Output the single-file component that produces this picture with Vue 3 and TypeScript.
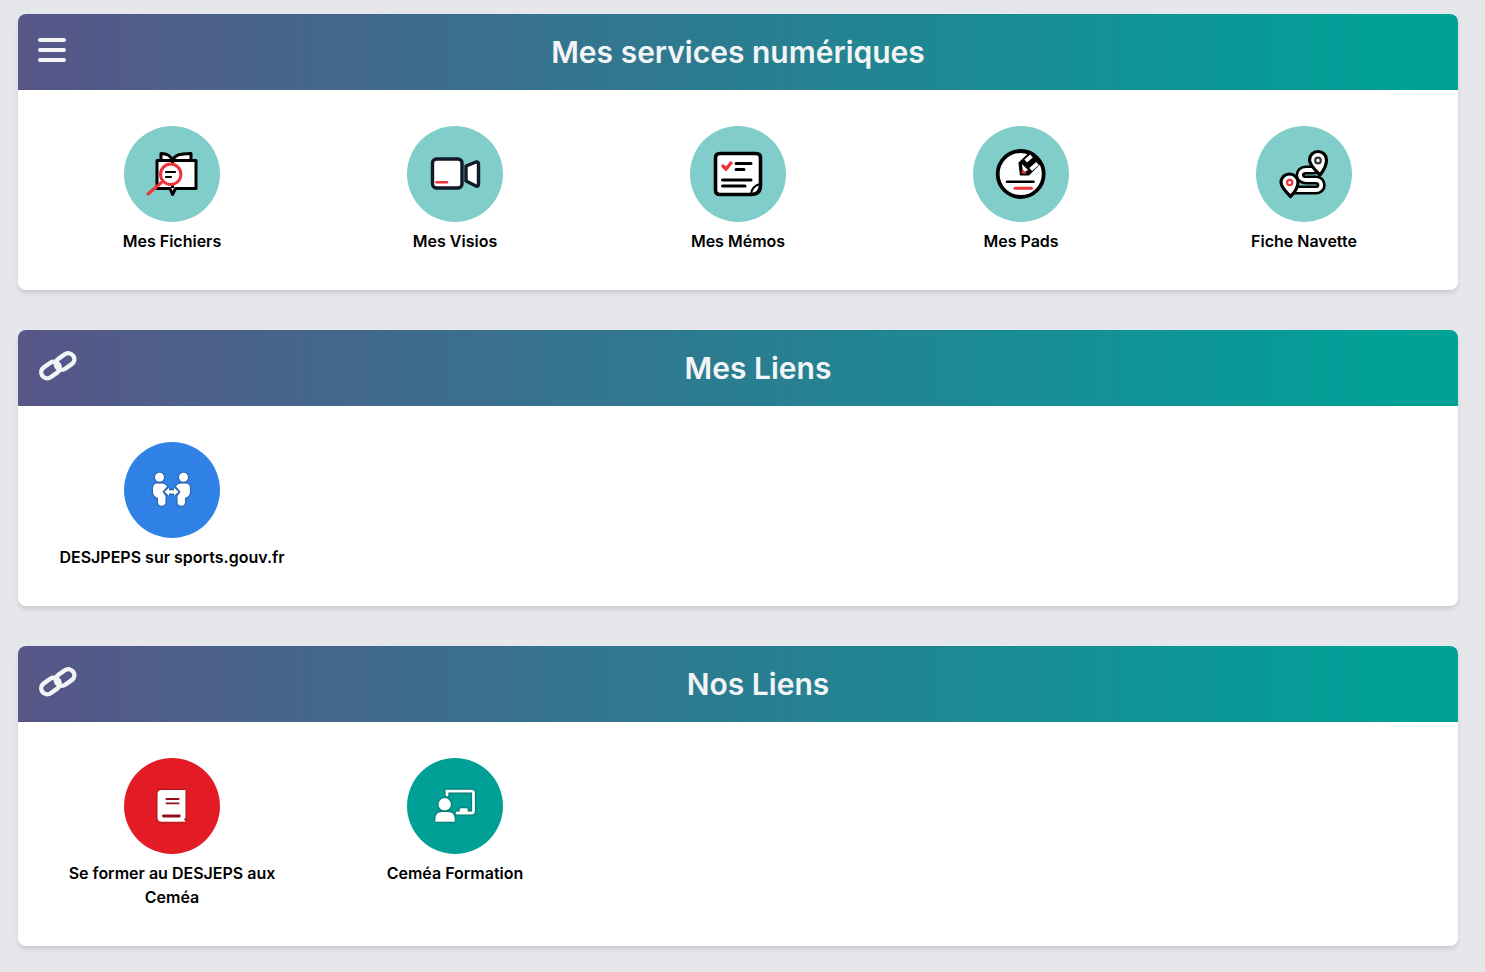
<script setup lang="ts">
interface Service {
  label: string
  icon: string
  color: string
}

interface Section {
  title: string
  menu?: boolean
  services: Service[]
}

const light = 'circle-light'

const sections: Section[] = [
  {
    title: 'Mes services numériques',
    menu: true,
    services: [
      { label: 'Mes Fichiers', icon: 'book', color: light },
      { label: 'Mes Visios', icon: 'video', color: light },
      { label: 'Mes Mémos', icon: 'memo', color: light },
      { label: 'Mes Pads', icon: 'pad', color: light },
      { label: 'Fiche Navette', icon: 'route', color: light },
    ],
  },
  {
    title: 'Mes Liens',
    services: [{ label: 'DESJPEPS sur sports.gouv.fr', icon: 'people', color: 'circle-blue' }],
  },
  {
    title: 'Nos Liens',
    services: [
      { label: 'Se former au DESJEPS aux Ceméa', icon: 'manual', color: 'circle-red' },
      { label: 'Ceméa Formation', icon: 'teacher', color: 'circle-teal' },
    ],
  },
]
</script>

<template>
  <main class="page">
    <section v-for="section in sections" :key="section.title" class="card">
      <header class="card-header">
        <button v-if="section.menu" class="menu-btn" aria-label="Menu">
          <span /><span /><span />
        </button>
        <svg v-else class="link-icon" viewBox="0 0 40 30" fill="none" stroke="#f3f4f6" stroke-width="4.4">
          <rect x="2.5" y="13" width="20" height="12" rx="6" transform="rotate(-35 12.5 19)" />
          <rect x="17" y="4.5" width="20" height="12" rx="6" transform="rotate(-35 27 10.5)" />
        </svg>
        <h2 class="card-title">{{ section.title }}</h2>
      </header>

      <div class="card-body">
        <a v-for="service in section.services" :key="service.label" class="service" href="#">
          <span class="circle" :class="service.color">
            <svg class="service-icon" viewBox="0 0 96 96">
              <g v-if="service.icon === 'book'" stroke="#000" stroke-width="3" fill="#fff" stroke-linejoin="round">
                <path d="M37 36 V27.5 C42 27.5 47 29.5 48.5 35 C50 29.5 55 27.5 67 27.5 V36 Z" />
                <path d="M33 34.5 H72 V62.5 H51.5 L48.5 68.5 L46 62.5 H33 Z" />
                <path d="M48.5 35 V62" fill="none" />
                <circle cx="46.7" cy="48.3" r="10.2" stroke="#ee3338" />
                <path d="M37.5 56.5 L24 68" fill="none" stroke="#ee3338" stroke-linecap="round" />
                <path d="M42 46 H51 M42 51 H47" fill="none" stroke-linecap="round" stroke-width="2.2" />
              </g>
              <g v-else-if="service.icon === 'video'" stroke="#111827" stroke-width="3.4" fill="#fff" stroke-linejoin="round">
                <rect x="25.5" y="33" width="29.5" height="29" rx="4" />
                <path d="M59 40 L69 36 Q71.5 35.5 71.5 38 V58 Q71.5 61 69 60 L59 55 Z" />
                <path d="M29.5 56.3 H40" fill="none" stroke="#ee3338" stroke-linecap="round" stroke-width="2.6" />
              </g>
              <g v-else-if="service.icon === 'memo'" stroke="#000" fill="none" stroke-linecap="round">
                <path d="M30 27.5 H66 Q70.5 27.5 70.5 32 V59 Q70.5 68.5 61 68.5 H30 Q25.5 68.5 25.5 64 V32 Q25.5 27.5 30 27.5 Z" fill="#fff" stroke-width="3.6" />
                <path d="M70 58 Q62 60 61 68" stroke-width="2" />
                <path d="M33 40 L36 43 L41 37" stroke="#ee3338" stroke-width="3.4" />
                <path d="M46 37.5 H61 M46 43.5 H54 M32.5 54 H61 M32.5 60 H55" stroke-width="3" />
              </g>
              <g v-else-if="service.icon === 'pad'" stroke="#000" fill="none" stroke-linecap="round" stroke-linejoin="round">
                <circle cx="47.7" cy="48" r="23" fill="#fff" stroke-width="3.8" />
                <path d="M46 37 L56 27.5 L67.5 37 L55.5 49 H47.5 Z" fill="#000" stroke-width="1.2" />
                <path d="M52.7 35 L58.5 30 M57.7 43.5 L64.5 37.5" stroke="#fff" stroke-width="4" stroke-linecap="butt" />
                <path d="M49 38 L55 44 L50 47 Z" fill="#fff" stroke="none" />
                <path d="M49.2 47 L49.5 43.5 L53 47 Z" fill="#ee3338" stroke="#ee3338" stroke-width="0.8" />
                <path d="M34 55.7 H60.5" stroke-width="2.6" />
                <path d="M42 62.3 H58.5" stroke="#ee3338" stroke-width="3" />
              </g>
              <g v-else-if="service.icon === 'route'" fill="none" stroke-linecap="round" stroke-linejoin="round">
                <path d="M58 44 H50 C42 44 42 54 50 54 H60 C67 54 67 64 60 64 H36" stroke="#000" stroke-width="9" />
                <path d="M58 44 H50 C42 44 42 54 50 54 H60 C67 54 67 64 60 64 H36" stroke="#fff" stroke-width="3.8" />
                <path d="M64 49 C60 45 53.5 39 53.5 34 A8.5 8.5 0 0 1 70.5 34 C70.5 39 68 44 64 49 Z" fill="#fff" stroke="#000" stroke-width="3.2" />
                <circle cx="62" cy="34.5" r="2.8" fill="#fff" stroke="#333" stroke-width="2.2" />
                <path d="M34.5 70.5 C30 66 25 61 25 56.5 A8.5 8.5 0 0 1 42 56.5 C42 61 39 66 34.5 70.5 Z" fill="#fff" stroke="#000" stroke-width="3.2" />
                <circle cx="33.7" cy="56.5" r="2.6" fill="#fff" stroke="#ee3338" stroke-width="2.2" />
              </g>
              <g v-else-if="service.icon === 'people'" class="soft-shadow" fill="#fff">
                <circle cx="35.5" cy="35.3" r="4.5" />
                <circle cx="59.5" cy="35.3" r="4.5" />
                <path d="M29 46 Q29 41.5 33.5 41.5 H37 Q41.5 41.5 43 44.5 L38.5 49.8 L41.5 54 V60 Q41.5 63.7 37.5 63.7 Q34 63.7 34 60 V56 Q29 54 29 50 Z" />
                <path d="M66 46 Q66 41.5 61.5 41.5 H58 Q53.5 41.5 52 44.5 L56.5 49.8 L53.5 54 V60 Q53.5 63.7 57.5 63.7 Q61 63.7 61 60 V56 Q66 54 66 50 Z" />
                <path d="M40.5 49.8 L45 45.8 V48.2 H50 V45.8 L54.5 49.8 L50 53.8 V51.4 H45 V53.8 Z" />
              </g>
              <g v-else-if="service.icon === 'manual'" class="soft-shadow">
                <path d="M37.5 32 H61.5 V60 L60 61 L61.5 63.7 H37.5 Q33.5 63.7 33.5 60 V36 Q33.5 32 37.5 32 Z" fill="#fff" />
                <path d="M41.7 41 H55.3 M41.7 45.3 H55.3" stroke="#8f1016" stroke-width="1.8" />
                <path d="M39.5 58 H55.3" stroke="#8f1016" stroke-width="2.8" stroke-linecap="round" />
              </g>
              <g v-else-if="service.icon === 'teacher'" class="soft-shadow" fill="#fff">
                <path d="M40 33.2 H64.5 Q66.5 33.2 66.5 35.2 V53 Q66.5 55 64.5 55 H50" fill="none" stroke="#fff" stroke-width="2.8" stroke-linecap="round" />
                <path d="M40 33.2 V37" fill="none" stroke="#fff" stroke-width="2.8" stroke-linecap="round" />
                <circle cx="37.7" cy="46.3" r="6.2" />
                <path d="M28.3 63.7 V61 Q28.3 54 35 54 H41 Q47.7 54 47.7 61 V63.7 Z" />
                <rect x="52.7" y="50.3" width="8" height="5" rx="1.2" />
              </g>
            </svg>
          </span>
          <span class="service-label">{{ service.label }}</span>
        </a>
      </div>
    </section>
  </main>
</template>

<style scoped>
.page {
  display: flex;
  flex-direction: column;
  gap: 40px;
  padding: 14px 27px 26px 18px;
  font-family: Inter, "Liberation Sans", sans-serif;
}

.card {
  background: #fff;
  border-radius: 8px;
  overflow: hidden;
  box-shadow: 0 4px 6px -1px rgba(0, 0, 0, 0.1), 0 2px 4px -1px rgba(0, 0, 0, 0.06);
}

.card-header {
  position: relative;
  display: flex;
  align-items: center;
  height: 76px;
  padding: 0 20px;
  background: linear-gradient(to right, #575688, #00a298 97%);
}

.menu-btn {
  position: absolute;
  left: 20px;
  top: 24px;
  display: flex;
  flex-direction: column;
  gap: 6px;
  width: 28px;
  padding: 0;
  border: 0;
  background: none;
}

.menu-btn span {
  display: block;
  height: 4px;
  border-radius: 2px;
  background: #f3f4f6;
}

.link-icon {
  flex: none;
  align-self: flex-start;
  width: 40px;
  height: 30px;
  margin-top: 21px;
}

.card-title {
  flex: 1;
  margin: 0;
  color: #f3f4f6;
  font-size: 30px;
  font-weight: 600;
  line-height: 36px;
  text-align: center;
}

.card-body {
  display: grid;
  grid-template-columns: repeat(5, 1fr);
  padding: 36px 12.5px 37px;
}

.service {
  display: flex;
  flex-direction: column;
  align-items: center;
  gap: 7px;
  padding: 0 16px;
  color: #000;
  text-decoration: none;
}

.circle {
  display: block;
  width: 96px;
  height: 96px;
  border-radius: 50%;
}

.circle-light {
  background: #81cdc9;
}

.circle-blue {
  background: #3182e6;
}

.circle-red {
  background: #e31b25;
}

.circle-teal {
  background: #00a096;
}

.service-icon {
  display: block;
  width: 96px;
  height: 96px;
}

.soft-shadow {
  filter: drop-shadow(0 0 1px rgba(0, 0, 0, 0.6));
}

.service-label {
  font-size: 16px;
  font-weight: 600;
  line-height: 24px;
  text-align: center;
}
</style>

<style>
html,
body {
  background: #e5e7eb;
}
</style>
